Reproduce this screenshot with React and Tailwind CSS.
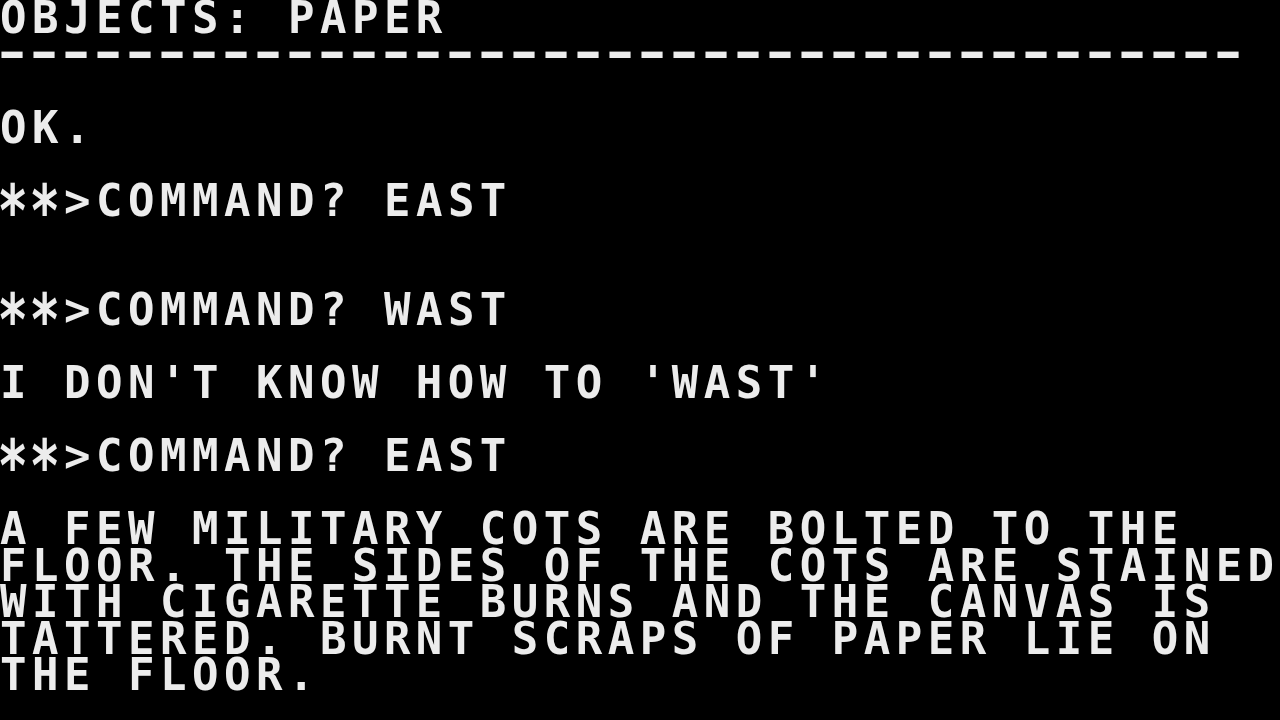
import React from "react";

const rows = [
  "OBJECTS: PAPER",
  "__DASHES__",
  "",
  "OK.",
  "",
  "**>COMMAND? EAST",
  "",
  "",
  "**>COMMAND? WAST",
  "",
  "I DON'T KNOW HOW TO 'WAST'",
  "",
  "**>COMMAND? EAST",
  "",
  "A FEW MILITARY COTS ARE BOLTED TO THE",
  "FLOOR. THE SIDES OF THE COTS ARE STAINED",
  "WITH CIGARETTE BURNS AND THE CANVAS IS",
  "TATTERED. BURNT SCRAPS OF PAPER LIE ON",
  "THE FLOOR.",
];

function Line({ text }) {
  if (!text.startsWith("**")) return <>{text}</>;
  return (
    <>
      <span className="inline-block origin-top scale-y-[1.6] scale-x-[1.15]">*</span>
      <span className="inline-block origin-top scale-y-[1.6] scale-x-[1.15]">*</span>
      {text.slice(2)}
    </>
  );
}

export default function App() {
  return (
    <div className="w-[1280px] h-[720px] bg-black overflow-hidden">
      <div
        className="flex flex-col text-[#ececec] font-bold text-[44px] tracking-[5.5px] blur-[0.6px]"
        style={{ fontFamily: '"DejaVu Sans Mono", "Liberation Mono", monospace' }}
      >
        {rows.map((r, i) =>
          r === "__DASHES__" ? (
            <div key={i} className="h-[36.5px] leading-[32px] flex whitespace-pre">
              {Array.from({ length: 39 }).map((_, j) => (
                <span key={j} className="inline-block w-[32px] pr-[5px] text-center tracking-normal scale-x-[1.55]">-</span>
              ))}
            </div>
          ) : (
            <div key={i} className="h-[36.5px] leading-[36.5px] whitespace-pre">
              <Line text={r} />
            </div>
          )
        )}
      </div>
    </div>
  );
}
